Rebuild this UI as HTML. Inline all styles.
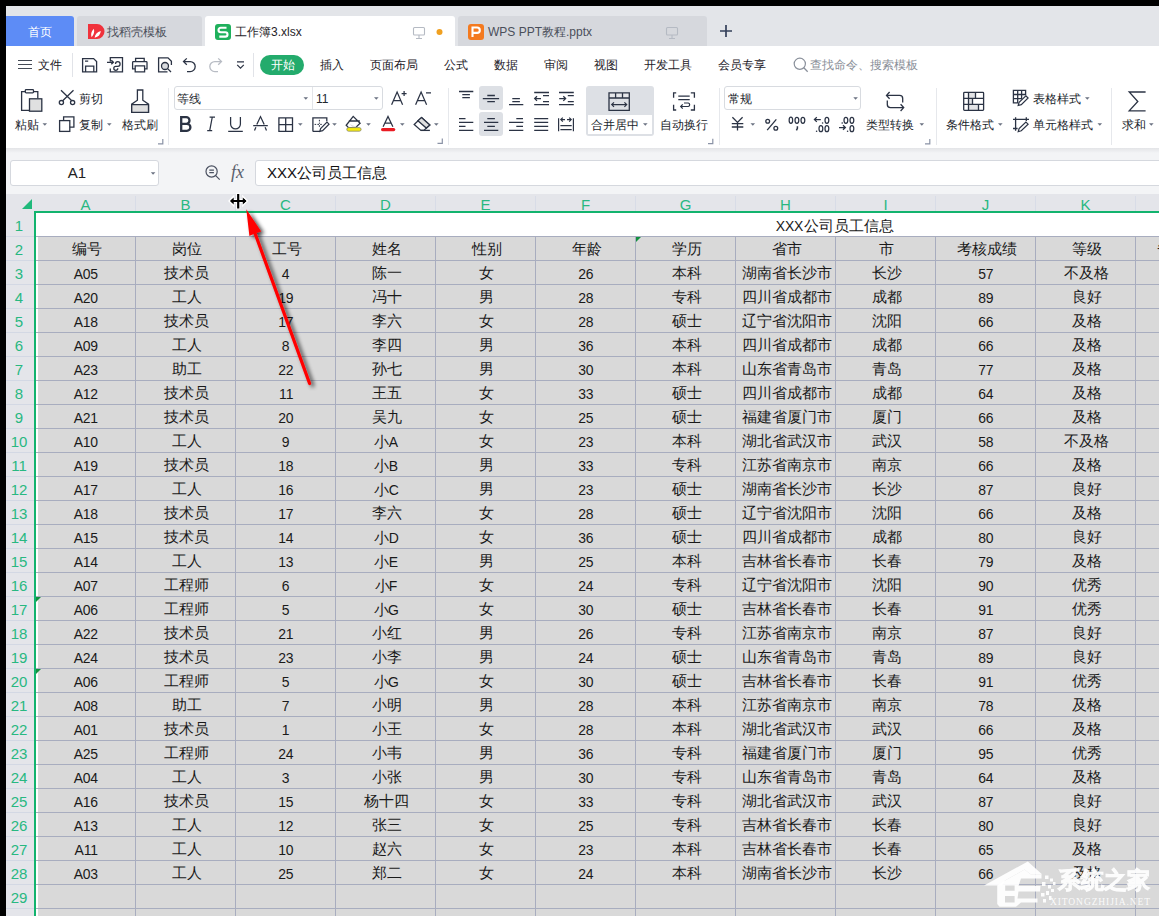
<!DOCTYPE html>
<html><head><meta charset="utf-8"><style>*{box-sizing:border-box;margin:0;padding:0}
html,body{width:1159px;height:916px;overflow:hidden;background:#000;font-family:"Liberation Sans",sans-serif;color:#222}
#root{position:absolute;left:0;top:0;width:1159px;height:916px;overflow:hidden}
.abs{position:absolute}
#tabbar{position:absolute;left:6px;top:6px;width:1153px;height:40px;background:#e3e4e8}
.tab{position:absolute;top:10px;height:30px;border-radius:3px 3px 0 0;font-size:13px;line-height:30px;white-space:nowrap}
#menu{position:absolute;left:6px;top:46px;width:1153px;height:102px;background:#fff}
#fbar{position:absolute;left:6px;top:148px;width:1153px;height:46px;background:#f3f4f6}
.mi{position:absolute;top:57px;font-size:13px;line-height:16px;color:#333;white-space:nowrap}
.colhdr{position:absolute;left:6px;top:194px;width:1153px;height:17px;background:#e4e5ea}
.ch{position:absolute;top:194px;width:101px;height:17px;text-align:center;font-size:15px;line-height:21px;color:#28b881}
.chl{position:absolute;top:196px;width:1px;height:15px;background:#d8dce7}
.rowhdr{position:absolute;left:6px;top:211px;width:28px;height:705px;background:#e4e5ea}
.rh{position:absolute;left:5px;width:28px;text-align:center;font-size:15px;color:#28b881;padding-top:1px}
.rhl{position:absolute;left:6px;width:28px;height:1px;background:#d3d8e4}
#grid{position:absolute;left:0;top:0;width:1159px;height:916px}
.cells{position:absolute;background:#d9d9d9}
.r1{position:absolute;background:#fff}
.hl{position:absolute;left:36px;width:1123px;height:1px;background:#a8adbf}
.vl{position:absolute;top:236px;width:1px;height:680px;background:#a8adbf}
.t{position:absolute;text-align:center;font-size:14.67px;color:#1a1a1a;white-space:nowrap}
.tri{position:absolute;width:0;height:0;border-top:5px solid #12903f;border-right:5px solid transparent}
.tt{position:absolute;top:17px;height:30px;line-height:30px;font-size:12px;white-space:nowrap}
.mt{position:absolute;top:57px;height:16px;line-height:16px;font-size:12px;color:#1d2128;white-space:nowrap}
.rl{position:absolute;height:14px;line-height:14px;font-size:12px;color:#22262d;white-space:nowrap}
.n{font-size:15.5px;letter-spacing:-0.2px;display:inline-block;transform:translateX(-0.7px) scaleX(0.9);transform-origin:50% 50%}
.t .n{margin-right:0}
</style></head><body>
<div id="root">
<div class="abs" style="left:6px;top:6px;width:1153px;height:40px;background:#e3e5e9"></div>
<div class="abs" style="left:6px;top:16px;width:68px;height:30px;background:#5d8cf6;border-radius:0 3px 0 0"></div>
<div class="abs" style="left:77px;top:16px;width:125px;height:30px;background:#d6d8dd;border-radius:3px 3px 0 0"></div>
<div class="abs" style="left:205px;top:16px;width:250px;height:30px;background:#fff;border-radius:3px 3px 0 0"></div>
<div class="abs" style="left:458px;top:16px;width:249px;height:30px;background:#d6d8dd;border-radius:3px 3px 0 0"></div>
<div class="tt" style="left:28px;color:#fff">首页</div>
<div class="tt" style="left:107px;color:#4a4f5a">找稻壳模板</div>
<div class="tt" style="left:235px;color:#1f2329">工作簿3.xlsx</div>
<div class="tt" style="left:488px;color:#4a4f5a">WPS PPT教程.pptx</div>
<div class="abs" style="left:6px;top:46px;width:1153px;height:102px;background:#fff"></div>
<div class="abs" style="left:6px;top:148px;width:1153px;height:46px;background:linear-gradient(#e3e4e7,#f3f4f6 5px)"></div>
<!-- menu text -->
<div class="mt" style="left:38px">文件</div>
<div class="abs" style="left:260px;top:55px;width:44px;height:20px;border-radius:10px;background:#23ab6c"></div>
<div class="mt" style="left:271px;color:#fff">开始</div>
<div class="mt" style="left:320px">插入</div>
<div class="mt" style="left:370px">页面布局</div>
<div class="mt" style="left:444px">公式</div>
<div class="mt" style="left:494px">数据</div>
<div class="mt" style="left:544px">审阅</div>
<div class="mt" style="left:594px">视图</div>
<div class="mt" style="left:644px">开发工具</div>
<div class="mt" style="left:718px">会员专享</div>
<div class="mt" style="left:810px;color:#8a8f99">查找命令、搜索模板</div>
<!-- ribbon labels -->
<div class="rl" style="left:15px;top:118px">粘贴</div>
<div class="rl" style="left:79px;top:92px">剪切</div>
<div class="rl" style="left:79px;top:118px">复制</div>
<div class="rl" style="left:122px;top:118px">格式刷</div>
<div class="abs" style="left:174px;top:86px;width:209px;height:24px;border:1px solid #d8dbe0;border-radius:3px;background:#fff"></div>
<div class="abs" style="left:312px;top:87px;width:1px;height:22px;background:#e3e5e9"></div>
<div class="rl" style="left:177px;top:92px">等线</div>
<div class="rl" style="left:316px;top:92px">11</div>
<div class="abs" style="left:586px;top:86px;width:68px;height:50px;background:#dde0e5;border-radius:3px"></div>
<div class="abs" style="left:588px;top:115px;width:64px;height:19px;background:#fff"></div>
<div class="abs" style="left:479px;top:86px;width:24px;height:24px;background:#dde0e5;border-radius:3px"></div>
<div class="abs" style="left:479px;top:112px;width:24px;height:24px;background:#dde0e5;border-radius:3px"></div>
<div class="rl" style="left:591px;top:118px">合并居中</div>
<div class="rl" style="left:660px;top:118px">自动换行</div>
<div class="abs" style="left:724px;top:86px;width:137px;height:24px;border:1px solid #d8dbe0;border-radius:3px;background:#fff"></div>
<div class="rl" style="left:728px;top:92px">常规</div>
<div class="rl" style="left:866px;top:118px">类型转换</div>
<div class="rl" style="left:946px;top:118px">条件格式</div>
<div class="rl" style="left:1033px;top:92px">表格样式</div>
<div class="rl" style="left:1033px;top:118px">单元格样式</div>
<div class="rl" style="left:1122px;top:118px">求和</div>
<!-- formula bar -->
<div class="abs" style="left:10px;top:160px;width:149px;height:26px;border:1px solid #d5d8de;border-radius:3px;background:#fff"></div>
<div class="abs" style="left:10px;top:160px;width:134px;height:26px;text-align:center;font-size:15px;line-height:26px;color:#222">A1</div>
<div class="abs" style="left:255px;top:160px;width:910px;height:26px;border:1px solid #d5d8de;border-radius:3px;background:#fff"></div>
<div class="abs" style="left:267px;top:160px;font-size:15px;line-height:26px;color:#111;white-space:nowrap">XXX公司员工信息</div>
<svg class="abs" style="left:0;top:0" width="1159" height="200" viewBox="0 0 1159 200" fill="none" stroke="#2b3344" stroke-width="1.3" stroke-linecap="butt" stroke-linejoin="miter">
<!-- tab icons -->
<g stroke="none">
<path d="M88 24 h9 a7.5 7.5 0 0 1 0 15 h-9 z" fill="#f0323c"/>
<path d="M91.6 37.2 q-1.6-4.2 2.2-8.4 q1.4 4.4 -2.2 8.4 z M94.6 37.8 q0.6-5.2 6.2-6.8 q-0.4 5.4 -6.2 6.8 z" fill="#fff"/>
<rect x="215" y="24" width="16" height="16" rx="3" fill="#1fb05c"/>
<path d="M226.5 27.8 h-5.8 a2.2 2.2 0 0 0 0 4.4 h4.6 a2.2 2.2 0 0 1 0 4.4 h-6" stroke="#fff" stroke-width="2.1" fill="none"/>
<rect x="468" y="24" width="16" height="16" rx="3" fill="#f47a1f"/>
<path d="M472.5 37 v-9.5 h4.6 a2.7 2.7 0 0 1 0 5.4 h-4.6" stroke="#fff" stroke-width="2.1" fill="none"/>
<circle cx="439.5" cy="32" r="3" fill="#f0a020"/>
</g>
<g stroke="#b5bac3" stroke-width="1.1">
<rect x="413.5" y="27.5" width="11" height="7.5" rx="1"/><path d="M419 35 v3 M416 38.5 h6"/>
<rect x="666.5" y="27.5" width="11" height="7.5" rx="1"/><path d="M672 35 v3 M669 38.5 h6"/>
</g>
<path d="M720 31 h12 M726 25 v12" stroke="#34405a" stroke-width="1.7"/>
<!-- menu row -->
<path d="M18 60.5 h14 M18 64.5 h14 M18 68.5 h14" stroke="#444a55" stroke-width="1.2"/>
<path d="M72.5 53 v24 M253.5 53 v24" stroke="#e1e3e8" stroke-width="1"/>
<path d="M82.6 58.6 h11 l3 3 v10.2 h-14 z M85.6 71.8 v-5.6 h8.2 v5.6 M85 61.2 h3.2"/>
<path d="M110.3 61.5 v-3.9 h12.2 v14.2 h-12.2 v-3.2 M107 62.3 h6.5 M111.3 60.3 l2.1 2 l-2.1 2 M115.5 64 a2.3 2.3 0 1 1 2.3 2.3 h-2 a2 2 0 1 0 2 2"/>
<path d="M135.6 61.9 v-3.5 h8.6 v3.5 M135.2 68.8 h-2.6 v-6.4 q0-0.8 0.8-0.8 h12.8 q0.8 0 0.8 0.8 v6.4 h-2.6 M135.2 65.8 h9.4 v6 h-9.4 z"/>
<path d="M167.5 71.8 h-8.9 v-14 h9.4 l3.4 3.4 v3.8"/>
<circle cx="165" cy="66" r="3.5" fill="#d9dbdf"/><path d="M167.6 68.6 l3.4 3.4"/>
<path d="M186.8 58.4 l-3.3 3.2 l3.3 3.2 M183.6 61.6 h6.6 a5 5 0 0 1 0 10 h-3.2"/>
<path d="M218.2 58.4 l3.3 3.2 l-3.3 3.2 M221.4 61.6 h-6.6 a5 5 0 0 0 0 10 h3.2" stroke="#b8bcc4"/>
<path d="M237 61.8 h7 M237.2 64.8 l3.3 3.3 l3.3 -3.3" stroke-width="1.2"/>
<circle cx="799.8" cy="63.8" r="5.6" stroke="#8a909b" stroke-width="1.2"/><path d="M803.8 67.8 l3.9 3.9" stroke="#8a909b" stroke-width="1.3"/>
<!-- separators ribbon -->
<path d="M168.5 88 v57 M448.5 88 v57 M719.5 88 v57 M936.5 88 v57 M1111.5 88 v57" stroke="#e6e8ec" stroke-width="1"/>
<!-- corner marks -->
<path d="M162.8 139 v4.8 h-4.8 M442.3 138.5 v4.8 h-4.8 M712.8 138.8 v4.8 h-4.8 M929.8 139 v4.8 h-4.8" stroke="#8b93a6" stroke-width="1.2"/>
<!-- group 1 -->
<path d="M29 110.4 h-7.4 v-18.8 h3.6 M33.6 91.6 h4.2 v7"/>
<rect x="25.3" y="89.6" width="8.2" height="3.2" rx="0.8" fill="#fff"/>
<rect x="29.5" y="98.8" width="12.3" height="12.4" fill="#e0e0e0"/>
<path d="M61 90.3 L71.8 100.8 M73.5 90.3 L62.7 100.8"/>
<circle cx="61.4" cy="102.6" r="2.1"/><circle cx="72.6" cy="102.6" r="2.1"/>
<rect x="59.6" y="120.6" width="10.2" height="10.8"/>
<path d="M63.6 120.6 v-3.7 h10.3 v10.3 h-4.1"/>
<path d="M137.4 100.2 v-10.2 h5.4 v10.2 l5.7 4 v8.2 h-16.8 v-8.2 z" />
<rect x="132.2" y="105" width="15.8" height="7" fill="#e0e0e0" stroke="none"/>
<path d="M131.7 104.6 h16.8 M131.7 104.2 v8.2 h16.8 v-8.2"/>
<!-- dropdown tris -->
<g fill="#6b7282" stroke="none">
<path d="M42.5 123.3 h4.6 l-2.3 2.4 z"/>
<path d="M107 123.3 h4.6 l-2.3 2.4 z"/>
<path d="M303.5 97.3 h4.6 l-2.3 2.4 z"/>
<path d="M374 97.3 h4.6 l-2.3 2.4 z"/>
<path d="M298 123.3 h4.6 l-2.3 2.4 z"/>
<path d="M332.2 123.3 h4.6 l-2.3 2.4 z"/>
<path d="M366.2 123.3 h4.6 l-2.3 2.4 z"/>
<path d="M400 123.3 h4.6 l-2.3 2.4 z"/>
<path d="M434 123.3 h4.6 l-2.3 2.4 z"/>
<path d="M643 123.3 h4.6 l-2.3 2.4 z"/>
<path d="M853.3 97.3 h4.6 l-2.3 2.4 z"/>
<path d="M750.5 123.3 h4.6 l-2.3 2.4 z"/>
<path d="M919.5 123.3 h4.6 l-2.3 2.4 z"/>
<path d="M998 123.3 h4.6 l-2.3 2.4 z"/>
<path d="M1085 97.3 h4.6 l-2.3 2.4 z"/>
<path d="M1097.5 123.3 h4.6 l-2.3 2.4 z"/>
<path d="M1149 123.3 h4.6 l-2.3 2.4 z"/>
<path d="M150.8 172.3 h4.6 l-2.3 2.4 z"/>
</g>
<!-- group 2 -->
<path d="M391.6 104.8 L397.1 92 L402.6 104.8 M393.4 100.6 h7.4 M401.6 93.6 h5 M404.1 91.1 v5" stroke-width="1.25"/>
<path d="M415.6 104.8 L421.1 92 L426.6 104.8 M417.4 100.6 h7.4 M426 92.8 h5" stroke-width="1.25"/>
<path d="M181.2 117.2 h5 a3.3 3.3 0 0 1 0 6.6 h-5 z M181.2 123.8 h5.7 a3.5 3.5 0 0 1 0 7 h-5.7 z" stroke-width="2.3"/>
<path d="M209.6 117 h5.4 M207.2 130.6 h5 M212.3 117 L209.7 130.6" stroke-width="1.25"/>
<path d="M230.6 117 v7 a4.9 4.9 0 0 0 9.8 0 v-7 M228.2 131.4 h14.6" stroke-width="1.25"/>
<path d="M256.8 124.5 L260.5 116.6 L264.2 124.5 M253.2 125.6 h14.6 M255.9 127.2 L254.5 130.6 M265.1 127.2 L266.5 130.6" stroke-width="1.25"/>
<path d="M278.9 117.9 h13.6 v13.4 h-13.6 z M285.7 117.9 v13.4 M278.9 124.6 h13.6"/>
<path d="M312.9 131.4 v-13.5 h13.9 v3.4 M312.9 131.4 h7.2" />
<path d="M314.6 124.4 h1.6 M317.4 124.4 h1.6 M320.2 124.4 h1.6 M319.4 119.8 v1.6 M319.4 122.6 v1.2 M319.4 125.2 v1.6" stroke-width="1"/>
<path d="M319.8 131.4 l0.8 -2.8 l6.4 -6.4 l2 2 l-6.4 6.4 z" stroke-width="1.2"/>
<path d="M353.2 116.4 l6.9 6.8 l-4.6 4.4 h-7 l-2.3 -2.3 z M348.8 121 h11" />
<path d="M349.5 124 l3 3.3 h5" fill="#e0e0e0" stroke="none"/>
<rect x="346.8" y="127.6" width="14.3" height="3.6" rx="1.8" fill="#f7ec0c" stroke="#8a8a70" stroke-width="0.8"/>
<path d="M383.1 126.8 L388 116.4 L392.9 126.8 M384.9 123.2 h6.3" stroke-width="1.25"/>
<rect x="381" y="128" width="14.3" height="3.2" rx="1.6" fill="#ea1b23" stroke="none"/>
<path d="M421.5 117.6 l8.3 7.3 l-6 5.5 h-2.9 l-6.7 -6 z" fill="none"/>
<path d="M421.5 117.6 l8.3 7.3 l-3.5 3.2 l-8.4 -7.4 z" fill="#e0e0e0"/>
<path d="M420.9 130.4 h9"/>
<!-- group 3 align -->
<path d="M459 91.5 h14.3 M462.3 94.6 h7.6 M462.3 97.6 h7.6" stroke-width="1.3"/>
<path d="M487.3 95.5 h7.6 M482.8 98.6 h16.3 M487.3 101.6 h7.6" stroke-width="1.3"/>
<path d="M512.3 98.6 h7.6 M512.3 101.6 h7.6 M509 104.6 h14.3" stroke-width="1.3"/>
<path d="M534.2 92.5 h14.8 M543 95.6 h6 M543 101.6 h6 M534.2 104.6 h14.8 M541 98.6 h-6.5 M537 96.3 l-2.3 2.3 l2.3 2.3" stroke-width="1.3"/>
<path d="M559 92.5 h14.8 M567.8 95.6 h6 M567.8 101.6 h6 M559 104.6 h14.8 M559.2 98.6 h6.5 M563.3 96.3 l2.3 2.3 l-2.3 2.3" stroke-width="1.3"/>
<path d="M459 118.7 h6.5 M459 122.4 h14.3 M459 126.4 h6.5 M459 130.3 h14.3" stroke-width="1.3"/>
<path d="M487.3 118.7 h7.6 M484 122.4 h14.3 M487.3 126.4 h7.6 M484 130.3 h14.3" stroke-width="1.3"/>
<path d="M516.3 118.7 h6.7 M509 122.4 h14.3 M516.3 126.4 h6.7 M509 130.3 h14.3" stroke-width="1.3"/>
<path d="M534.2 118.7 h14 M534.2 122.4 h14 M534.2 126.4 h14 M534.2 130.3 h14" stroke-width="1.3"/>
<path d="M558.6 118.2 v13 M573.4 118.2 v13 M560.4 125.6 h11.3 M560.4 129.7 h11.3 M561 119.6 h4 M567 119.6 h4 M562.8 117.6 l-2 2 l2 2 M569.2 117.6 l2 2 l-2 2" stroke-width="1.2"/>
<!-- merge -->
<rect x="609.8" y="93" width="5.8" height="5" fill="#e6e7ea" stroke="none"/>
<rect x="615.6" y="93" width="7" height="5" fill="#e6e7ea" stroke="none"/>
<rect x="622.5" y="93" width="6.5" height="5" fill="#e6e7ea" stroke="none"/>
<path d="M609 92.8 h20.3 v17.6 h-20.3 z M609 98 h20.3 M615.6 92.8 v5.2 M622.5 92.8 v5.2"/>
<path d="M611.6 104.6 h15.2 M614 102.3 l-2.3 2.3 l2.3 2.3 M624.4 102.3 l2.3 2.3 l-2.3 2.3" stroke-width="1.2"/>
<path d="M676.2 92.8 h-2.6 v5 M690.8 92.8 h3.6 v5 M673.6 104.8 v5.2 h2.6 M694.4 104.8 v5.2 h-3.6"/>
<path d="M678.3 96.2 h11.4 M678.3 99.6 h11.4 M684 103 h4.3 a1.8 1.8 0 0 1 0 3.5 h-7.6 M682.7 104.4 l-2 2.1 l2 2.1" stroke-width="1.2"/>
<!-- group 4 -->
<path d="M732.4 117.2 l5.1 5.2 l5.1 -5.2 M737.5 122.4 v8.2 M731.8 123.6 h11.5 M731.8 127 h11.5" stroke-width="1.3"/>
<circle cx="767.7" cy="121.2" r="1.9"/><circle cx="775.8" cy="128.2" r="1.9"/>
<path d="M776.3 119.3 L767.2 130.2" stroke-width="1.3"/>
<path d="M889.6 92 l-3.1 3.4 l3.1 3.4 M886.8 95.4 h12.8 a3.1 3.1 0 0 1 3.1 3.1 v4 M887.3 100.6 v4 a3.1 3.1 0 0 0 3.1 3.1 h12.8 M900.6 104.2 l3.1 3.4 l-3.1 3.4" stroke-width="1.3"/>
<!-- group 5 -->
<rect x="968.8" y="92.8" width="6.5" height="5.4" fill="#e2e3e6" stroke="none"/>
<rect x="968.8" y="98.6" width="3.6" height="5.5" fill="#e2e3e6" stroke="none"/>
<rect x="968.8" y="104.5" width="9.5" height="5.6" fill="#e2e3e6" stroke="none"/>
<rect x="963.7" y="92.4" width="19.9" height="18" rx="0.8"/>
<path d="M963.7 98.4 h19.9 M963.7 104.3 h19.9 M968.5 92.4 v18 M975.5 92.4 v6 M972.5 98.4 v5.9 M978.5 104.3 v6.1"/>
<path d="M1013.4 90.4 H1025.6 V94.5 H1021.6 V98.6 H1017.7 V102.8 H1013.4 Z M1013.4 94.5 H1021.6 M1013.4 98.6 H1017.7 M1017.7 90.4 V98.6 M1021.6 90.4 V94.5"/>
<path d="M1018.2 105.4 l0.9 -3 l6.8 -6.6 l2.2 2.2 l-6.8 6.6 z" stroke-width="1.2"/>
<path d="M1013 119.3 h16 M1015.6 117.2 v13.6 M1026.3 117.2 v3.8 M1013 128.5 h4.6"/>
<path d="M1018.2 131.6 l0.9 -3 l6.8 -6.6 l2.2 2.2 l-6.8 6.6 z" stroke-width="1.2"/>
<path d="M1145.6 92 h-16.4 l8.6 9.5 l-8.6 9.3 h16.4" stroke-width="1.3"/>
<!-- formula -->
<circle cx="211.6" cy="171.5" r="5.6" stroke="#4a5060" stroke-width="1.2"/>
<path d="M209.3 170.2 h4.6 M209.3 172.6 h4.6 M215.7 175.6 l4 4" stroke="#4a5060" stroke-width="1.2"/>
</svg>
<svg class="abs" style="left:0;top:0" width="1159" height="200" fill="none" stroke="#2b3344" stroke-width="1.25"><ellipse cx="790.9" cy="120.3" rx="1.75" ry="3.1"/><ellipse cx="796.9" cy="120.3" rx="1.9" ry="3.0"/><ellipse cx="802.9" cy="120.3" rx="1.9" ry="3.0"/><path d="M797.4 126.2 v2.2 l-1 2" stroke-width="1.5"/><path d="M820.8 119.6 h-6.4 M816.8 117.3 l-2.4 2.3 l2.4 2.3"/><circle cx="822.6" cy="123" r="0.8" fill="#2b3344" stroke="none"/><ellipse cx="826.9" cy="120.3" rx="1.9" ry="3.0"/><circle cx="816.6" cy="131.2" r="0.8" fill="#2b3344" stroke="none"/><ellipse cx="820.9" cy="128.7" rx="1.9" ry="3.0"/><ellipse cx="826.9" cy="128.7" rx="1.9" ry="3.0"/><circle cx="842.2" cy="123" r="0.8" fill="#2b3344" stroke="none"/><ellipse cx="845.9" cy="120.3" rx="1.9" ry="3.0"/><ellipse cx="851.9" cy="120.3" rx="1.9" ry="3.0"/><path d="M839 127.5 h6.4 M843 125.2 l2.4 2.3 l-2.4 2.3"/><circle cx="847.6" cy="131.2" r="0.8" fill="#2b3344" stroke="none"/><ellipse cx="851.9" cy="128.7" rx="1.9" ry="3.0"/></svg>
<div class="abs" style="left:231px;top:162px;font-size:18px;line-height:20px;color:#5a606c;font-family:'Liberation Serif',serif;font-style:italic">fx</div>


<div class="colhdr"></div><svg class="abs" style="left:0;top:0" width="40" height="215"><path d="M22 209 L32 199 L32 209 Z" fill="#20b97b"/></svg><div class="ch" style="left:35px">A</div><div class="chl" style="left:135px"></div><div class="ch" style="left:135px">B</div><div class="chl" style="left:235px"></div><div class="ch" style="left:235px">C</div><div class="chl" style="left:335px"></div><div class="ch" style="left:335px">D</div><div class="chl" style="left:435px"></div><div class="ch" style="left:435px">E</div><div class="chl" style="left:535px"></div><div class="ch" style="left:535px">F</div><div class="chl" style="left:635px"></div><div class="ch" style="left:635px">G</div><div class="chl" style="left:735px"></div><div class="ch" style="left:735px">H</div><div class="chl" style="left:835px"></div><div class="ch" style="left:835px">I</div><div class="chl" style="left:935px"></div><div class="ch" style="left:935px">J</div><div class="chl" style="left:1035px"></div><div class="ch" style="left:1035px">K</div><div class="chl" style="left:1135px"></div><div class="ch" style="left:1135px">L</div><div class="chl" style="left:1235px"></div>
<div class="rowhdr"></div><div class="rh" style="top:213px;height:23px;line-height:23px">1</div><div class="rhl" style="top:236px"></div><div class="rh" style="top:237px;height:23px;line-height:23px">2</div><div class="rhl" style="top:260px"></div><div class="rh" style="top:261px;height:23px;line-height:23px">3</div><div class="rhl" style="top:284px"></div><div class="rh" style="top:285px;height:23px;line-height:23px">4</div><div class="rhl" style="top:308px"></div><div class="rh" style="top:309px;height:23px;line-height:23px">5</div><div class="rhl" style="top:332px"></div><div class="rh" style="top:333px;height:23px;line-height:23px">6</div><div class="rhl" style="top:356px"></div><div class="rh" style="top:357px;height:23px;line-height:23px">7</div><div class="rhl" style="top:380px"></div><div class="rh" style="top:381px;height:23px;line-height:23px">8</div><div class="rhl" style="top:404px"></div><div class="rh" style="top:405px;height:23px;line-height:23px">9</div><div class="rhl" style="top:428px"></div><div class="rh" style="top:429px;height:23px;line-height:23px">10</div><div class="rhl" style="top:452px"></div><div class="rh" style="top:453px;height:23px;line-height:23px">11</div><div class="rhl" style="top:476px"></div><div class="rh" style="top:477px;height:23px;line-height:23px">12</div><div class="rhl" style="top:500px"></div><div class="rh" style="top:501px;height:23px;line-height:23px">13</div><div class="rhl" style="top:524px"></div><div class="rh" style="top:525px;height:23px;line-height:23px">14</div><div class="rhl" style="top:548px"></div><div class="rh" style="top:549px;height:23px;line-height:23px">15</div><div class="rhl" style="top:572px"></div><div class="rh" style="top:573px;height:23px;line-height:23px">16</div><div class="rhl" style="top:596px"></div><div class="rh" style="top:597px;height:23px;line-height:23px">17</div><div class="rhl" style="top:620px"></div><div class="rh" style="top:621px;height:23px;line-height:23px">18</div><div class="rhl" style="top:644px"></div><div class="rh" style="top:645px;height:23px;line-height:23px">19</div><div class="rhl" style="top:668px"></div><div class="rh" style="top:669px;height:23px;line-height:23px">20</div><div class="rhl" style="top:692px"></div><div class="rh" style="top:693px;height:23px;line-height:23px">21</div><div class="rhl" style="top:716px"></div><div class="rh" style="top:717px;height:23px;line-height:23px">22</div><div class="rhl" style="top:740px"></div><div class="rh" style="top:741px;height:23px;line-height:23px">23</div><div class="rhl" style="top:764px"></div><div class="rh" style="top:765px;height:23px;line-height:23px">24</div><div class="rhl" style="top:788px"></div><div class="rh" style="top:789px;height:23px;line-height:23px">25</div><div class="rhl" style="top:812px"></div><div class="rh" style="top:813px;height:23px;line-height:23px">26</div><div class="rhl" style="top:836px"></div><div class="rh" style="top:837px;height:23px;line-height:23px">27</div><div class="rhl" style="top:860px"></div><div class="rh" style="top:861px;height:23px;line-height:23px">28</div><div class="rhl" style="top:884px"></div><div class="rh" style="top:885px;height:23px;line-height:23px">29</div><div class="rhl" style="top:908px"></div><div class="rh" style="top:909px;height:23px;line-height:23px">30</div><div class="rhl" style="top:932px"></div>
<div id="grid"><div class="cells" style="left:36px;top:236px;width:1123px;height:680px"></div><div class="r1" style="left:36px;top:213px;width:1123px;height:23px"></div><div style="position:absolute;left:36px;top:236px;width:2px;height:680px;background:#fff"></div><div class="hl" style="top:236px"></div><div class="hl" style="top:260px"></div><div class="hl" style="top:284px"></div><div class="hl" style="top:308px"></div><div class="hl" style="top:332px"></div><div class="hl" style="top:356px"></div><div class="hl" style="top:380px"></div><div class="hl" style="top:404px"></div><div class="hl" style="top:428px"></div><div class="hl" style="top:452px"></div><div class="hl" style="top:476px"></div><div class="hl" style="top:500px"></div><div class="hl" style="top:524px"></div><div class="hl" style="top:548px"></div><div class="hl" style="top:572px"></div><div class="hl" style="top:596px"></div><div class="hl" style="top:620px"></div><div class="hl" style="top:644px"></div><div class="hl" style="top:668px"></div><div class="hl" style="top:692px"></div><div class="hl" style="top:716px"></div><div class="hl" style="top:740px"></div><div class="hl" style="top:764px"></div><div class="hl" style="top:788px"></div><div class="hl" style="top:812px"></div><div class="hl" style="top:836px"></div><div class="hl" style="top:860px"></div><div class="hl" style="top:884px"></div><div class="hl" style="top:908px"></div><div class="vl" style="left:135px"></div><div class="vl" style="left:235px"></div><div class="vl" style="left:335px"></div><div class="vl" style="left:435px"></div><div class="vl" style="left:535px"></div><div class="vl" style="left:635px"></div><div class="vl" style="left:735px"></div><div class="vl" style="left:835px"></div><div class="vl" style="left:935px"></div><div class="vl" style="left:1035px"></div><div class="vl" style="left:1135px"></div><div style="position:absolute;left:34px;top:211px;width:1125px;height:2px;background:#12b36e"></div><div style="position:absolute;left:34px;top:211px;width:2px;height:705px;background:#12b36e"></div><div class="t" style="left:735px;top:214px;width:200px;height:23px;line-height:23px"><span class="n" style="margin:0 -1.55px">XXX</span>公司员工信息</div><div class="t" style="left:36px;top:238px;width:101px;height:23px;line-height:23px">编号</div><div class="t" style="left:136px;top:238px;width:101px;height:23px;line-height:23px">岗位</div><div class="t" style="left:236px;top:238px;width:101px;height:23px;line-height:23px">工号</div><div class="t" style="left:336px;top:238px;width:101px;height:23px;line-height:23px">姓名</div><div class="t" style="left:436px;top:238px;width:101px;height:23px;line-height:23px">性别</div><div class="t" style="left:536px;top:238px;width:101px;height:23px;line-height:23px">年龄</div><div class="t" style="left:636px;top:238px;width:101px;height:23px;line-height:23px">学历</div><div class="t" style="left:736px;top:238px;width:101px;height:23px;line-height:23px">省市</div><div class="t" style="left:836px;top:238px;width:101px;height:23px;line-height:23px">市</div><div class="t" style="left:936px;top:238px;width:101px;height:23px;line-height:23px">考核成绩</div><div class="t" style="left:1036px;top:238px;width:101px;height:23px;line-height:23px">等级</div><div class="t" style="left:36px;top:262px;width:101px;height:23px;line-height:23px"><span class="n" style="margin:0 -1.35px">A05</span></div><div class="t" style="left:136px;top:262px;width:101px;height:23px;line-height:23px">技术员</div><div class="t" style="left:236px;top:262px;width:101px;height:23px;line-height:23px"><span class="n" style="margin:0 -0.42px">4</span></div><div class="t" style="left:336px;top:262px;width:101px;height:23px;line-height:23px">陈一</div><div class="t" style="left:436px;top:262px;width:101px;height:23px;line-height:23px">女</div><div class="t" style="left:536px;top:262px;width:101px;height:23px;line-height:23px"><span class="n" style="margin:0 -0.84px">26</span></div><div class="t" style="left:636px;top:262px;width:101px;height:23px;line-height:23px">本科</div><div class="t" style="left:736px;top:262px;width:101px;height:23px;line-height:23px">湖南省长沙市</div><div class="t" style="left:836px;top:262px;width:101px;height:23px;line-height:23px">长沙</div><div class="t" style="left:936px;top:262px;width:101px;height:23px;line-height:23px"><span class="n" style="margin:0 -0.84px">57</span></div><div class="t" style="left:1036px;top:262px;width:101px;height:23px;line-height:23px">不及格</div><div class="t" style="left:36px;top:286px;width:101px;height:23px;line-height:23px"><span class="n" style="margin:0 -1.35px">A20</span></div><div class="t" style="left:136px;top:286px;width:101px;height:23px;line-height:23px">工人</div><div class="t" style="left:236px;top:286px;width:101px;height:23px;line-height:23px"><span class="n" style="margin:0 -0.84px">19</span></div><div class="t" style="left:336px;top:286px;width:101px;height:23px;line-height:23px">冯十</div><div class="t" style="left:436px;top:286px;width:101px;height:23px;line-height:23px">男</div><div class="t" style="left:536px;top:286px;width:101px;height:23px;line-height:23px"><span class="n" style="margin:0 -0.84px">28</span></div><div class="t" style="left:636px;top:286px;width:101px;height:23px;line-height:23px">专科</div><div class="t" style="left:736px;top:286px;width:101px;height:23px;line-height:23px">四川省成都市</div><div class="t" style="left:836px;top:286px;width:101px;height:23px;line-height:23px">成都</div><div class="t" style="left:936px;top:286px;width:101px;height:23px;line-height:23px"><span class="n" style="margin:0 -0.84px">89</span></div><div class="t" style="left:1036px;top:286px;width:101px;height:23px;line-height:23px">良好</div><div class="t" style="left:36px;top:310px;width:101px;height:23px;line-height:23px"><span class="n" style="margin:0 -1.35px">A18</span></div><div class="t" style="left:136px;top:310px;width:101px;height:23px;line-height:23px">技术员</div><div class="t" style="left:236px;top:310px;width:101px;height:23px;line-height:23px"><span class="n" style="margin:0 -0.84px">17</span></div><div class="t" style="left:336px;top:310px;width:101px;height:23px;line-height:23px">李六</div><div class="t" style="left:436px;top:310px;width:101px;height:23px;line-height:23px">女</div><div class="t" style="left:536px;top:310px;width:101px;height:23px;line-height:23px"><span class="n" style="margin:0 -0.84px">28</span></div><div class="t" style="left:636px;top:310px;width:101px;height:23px;line-height:23px">硕士</div><div class="t" style="left:736px;top:310px;width:101px;height:23px;line-height:23px">辽宁省沈阳市</div><div class="t" style="left:836px;top:310px;width:101px;height:23px;line-height:23px">沈阳</div><div class="t" style="left:936px;top:310px;width:101px;height:23px;line-height:23px"><span class="n" style="margin:0 -0.84px">66</span></div><div class="t" style="left:1036px;top:310px;width:101px;height:23px;line-height:23px">及格</div><div class="t" style="left:36px;top:334px;width:101px;height:23px;line-height:23px"><span class="n" style="margin:0 -1.35px">A09</span></div><div class="t" style="left:136px;top:334px;width:101px;height:23px;line-height:23px">工人</div><div class="t" style="left:236px;top:334px;width:101px;height:23px;line-height:23px"><span class="n" style="margin:0 -0.42px">8</span></div><div class="t" style="left:336px;top:334px;width:101px;height:23px;line-height:23px">李四</div><div class="t" style="left:436px;top:334px;width:101px;height:23px;line-height:23px">男</div><div class="t" style="left:536px;top:334px;width:101px;height:23px;line-height:23px"><span class="n" style="margin:0 -0.84px">36</span></div><div class="t" style="left:636px;top:334px;width:101px;height:23px;line-height:23px">本科</div><div class="t" style="left:736px;top:334px;width:101px;height:23px;line-height:23px">四川省成都市</div><div class="t" style="left:836px;top:334px;width:101px;height:23px;line-height:23px">成都</div><div class="t" style="left:936px;top:334px;width:101px;height:23px;line-height:23px"><span class="n" style="margin:0 -0.84px">66</span></div><div class="t" style="left:1036px;top:334px;width:101px;height:23px;line-height:23px">及格</div><div class="t" style="left:36px;top:358px;width:101px;height:23px;line-height:23px"><span class="n" style="margin:0 -1.35px">A23</span></div><div class="t" style="left:136px;top:358px;width:101px;height:23px;line-height:23px">助工</div><div class="t" style="left:236px;top:358px;width:101px;height:23px;line-height:23px"><span class="n" style="margin:0 -0.84px">22</span></div><div class="t" style="left:336px;top:358px;width:101px;height:23px;line-height:23px">孙七</div><div class="t" style="left:436px;top:358px;width:101px;height:23px;line-height:23px">男</div><div class="t" style="left:536px;top:358px;width:101px;height:23px;line-height:23px"><span class="n" style="margin:0 -0.84px">30</span></div><div class="t" style="left:636px;top:358px;width:101px;height:23px;line-height:23px">本科</div><div class="t" style="left:736px;top:358px;width:101px;height:23px;line-height:23px">山东省青岛市</div><div class="t" style="left:836px;top:358px;width:101px;height:23px;line-height:23px">青岛</div><div class="t" style="left:936px;top:358px;width:101px;height:23px;line-height:23px"><span class="n" style="margin:0 -0.84px">77</span></div><div class="t" style="left:1036px;top:358px;width:101px;height:23px;line-height:23px">及格</div><div class="t" style="left:36px;top:382px;width:101px;height:23px;line-height:23px"><span class="n" style="margin:0 -1.35px">A12</span></div><div class="t" style="left:136px;top:382px;width:101px;height:23px;line-height:23px">技术员</div><div class="t" style="left:236px;top:382px;width:101px;height:23px;line-height:23px"><span class="n" style="margin:0 -0.84px">11</span></div><div class="t" style="left:336px;top:382px;width:101px;height:23px;line-height:23px">王五</div><div class="t" style="left:436px;top:382px;width:101px;height:23px;line-height:23px">女</div><div class="t" style="left:536px;top:382px;width:101px;height:23px;line-height:23px"><span class="n" style="margin:0 -0.84px">33</span></div><div class="t" style="left:636px;top:382px;width:101px;height:23px;line-height:23px">硕士</div><div class="t" style="left:736px;top:382px;width:101px;height:23px;line-height:23px">四川省成都市</div><div class="t" style="left:836px;top:382px;width:101px;height:23px;line-height:23px">成都</div><div class="t" style="left:936px;top:382px;width:101px;height:23px;line-height:23px"><span class="n" style="margin:0 -0.84px">64</span></div><div class="t" style="left:1036px;top:382px;width:101px;height:23px;line-height:23px">及格</div><div class="t" style="left:36px;top:406px;width:101px;height:23px;line-height:23px"><span class="n" style="margin:0 -1.35px">A21</span></div><div class="t" style="left:136px;top:406px;width:101px;height:23px;line-height:23px">技术员</div><div class="t" style="left:236px;top:406px;width:101px;height:23px;line-height:23px"><span class="n" style="margin:0 -0.84px">20</span></div><div class="t" style="left:336px;top:406px;width:101px;height:23px;line-height:23px">吴九</div><div class="t" style="left:436px;top:406px;width:101px;height:23px;line-height:23px">女</div><div class="t" style="left:536px;top:406px;width:101px;height:23px;line-height:23px"><span class="n" style="margin:0 -0.84px">25</span></div><div class="t" style="left:636px;top:406px;width:101px;height:23px;line-height:23px">硕士</div><div class="t" style="left:736px;top:406px;width:101px;height:23px;line-height:23px">福建省厦门市</div><div class="t" style="left:836px;top:406px;width:101px;height:23px;line-height:23px">厦门</div><div class="t" style="left:936px;top:406px;width:101px;height:23px;line-height:23px"><span class="n" style="margin:0 -0.84px">66</span></div><div class="t" style="left:1036px;top:406px;width:101px;height:23px;line-height:23px">及格</div><div class="t" style="left:36px;top:430px;width:101px;height:23px;line-height:23px"><span class="n" style="margin:0 -1.35px">A10</span></div><div class="t" style="left:136px;top:430px;width:101px;height:23px;line-height:23px">工人</div><div class="t" style="left:236px;top:430px;width:101px;height:23px;line-height:23px"><span class="n" style="margin:0 -0.42px">9</span></div><div class="t" style="left:336px;top:430px;width:101px;height:23px;line-height:23px">小<span class="n" style="margin:0 -0.51px">A</span></div><div class="t" style="left:436px;top:430px;width:101px;height:23px;line-height:23px">女</div><div class="t" style="left:536px;top:430px;width:101px;height:23px;line-height:23px"><span class="n" style="margin:0 -0.84px">23</span></div><div class="t" style="left:636px;top:430px;width:101px;height:23px;line-height:23px">本科</div><div class="t" style="left:736px;top:430px;width:101px;height:23px;line-height:23px">湖北省武汉市</div><div class="t" style="left:836px;top:430px;width:101px;height:23px;line-height:23px">武汉</div><div class="t" style="left:936px;top:430px;width:101px;height:23px;line-height:23px"><span class="n" style="margin:0 -0.84px">58</span></div><div class="t" style="left:1036px;top:430px;width:101px;height:23px;line-height:23px">不及格</div><div class="t" style="left:36px;top:454px;width:101px;height:23px;line-height:23px"><span class="n" style="margin:0 -1.35px">A19</span></div><div class="t" style="left:136px;top:454px;width:101px;height:23px;line-height:23px">技术员</div><div class="t" style="left:236px;top:454px;width:101px;height:23px;line-height:23px"><span class="n" style="margin:0 -0.84px">18</span></div><div class="t" style="left:336px;top:454px;width:101px;height:23px;line-height:23px">小<span class="n" style="margin:0 -0.51px">B</span></div><div class="t" style="left:436px;top:454px;width:101px;height:23px;line-height:23px">男</div><div class="t" style="left:536px;top:454px;width:101px;height:23px;line-height:23px"><span class="n" style="margin:0 -0.84px">33</span></div><div class="t" style="left:636px;top:454px;width:101px;height:23px;line-height:23px">专科</div><div class="t" style="left:736px;top:454px;width:101px;height:23px;line-height:23px">江苏省南京市</div><div class="t" style="left:836px;top:454px;width:101px;height:23px;line-height:23px">南京</div><div class="t" style="left:936px;top:454px;width:101px;height:23px;line-height:23px"><span class="n" style="margin:0 -0.84px">66</span></div><div class="t" style="left:1036px;top:454px;width:101px;height:23px;line-height:23px">及格</div><div class="t" style="left:36px;top:478px;width:101px;height:23px;line-height:23px"><span class="n" style="margin:0 -1.35px">A17</span></div><div class="t" style="left:136px;top:478px;width:101px;height:23px;line-height:23px">工人</div><div class="t" style="left:236px;top:478px;width:101px;height:23px;line-height:23px"><span class="n" style="margin:0 -0.84px">16</span></div><div class="t" style="left:336px;top:478px;width:101px;height:23px;line-height:23px">小<span class="n" style="margin:0 -0.55px">C</span></div><div class="t" style="left:436px;top:478px;width:101px;height:23px;line-height:23px">男</div><div class="t" style="left:536px;top:478px;width:101px;height:23px;line-height:23px"><span class="n" style="margin:0 -0.84px">23</span></div><div class="t" style="left:636px;top:478px;width:101px;height:23px;line-height:23px">硕士</div><div class="t" style="left:736px;top:478px;width:101px;height:23px;line-height:23px">湖南省长沙市</div><div class="t" style="left:836px;top:478px;width:101px;height:23px;line-height:23px">长沙</div><div class="t" style="left:936px;top:478px;width:101px;height:23px;line-height:23px"><span class="n" style="margin:0 -0.84px">87</span></div><div class="t" style="left:1036px;top:478px;width:101px;height:23px;line-height:23px">良好</div><div class="t" style="left:36px;top:502px;width:101px;height:23px;line-height:23px"><span class="n" style="margin:0 -1.35px">A18</span></div><div class="t" style="left:136px;top:502px;width:101px;height:23px;line-height:23px">技术员</div><div class="t" style="left:236px;top:502px;width:101px;height:23px;line-height:23px"><span class="n" style="margin:0 -0.84px">17</span></div><div class="t" style="left:336px;top:502px;width:101px;height:23px;line-height:23px">李六</div><div class="t" style="left:436px;top:502px;width:101px;height:23px;line-height:23px">女</div><div class="t" style="left:536px;top:502px;width:101px;height:23px;line-height:23px"><span class="n" style="margin:0 -0.84px">28</span></div><div class="t" style="left:636px;top:502px;width:101px;height:23px;line-height:23px">硕士</div><div class="t" style="left:736px;top:502px;width:101px;height:23px;line-height:23px">辽宁省沈阳市</div><div class="t" style="left:836px;top:502px;width:101px;height:23px;line-height:23px">沈阳</div><div class="t" style="left:936px;top:502px;width:101px;height:23px;line-height:23px"><span class="n" style="margin:0 -0.84px">66</span></div><div class="t" style="left:1036px;top:502px;width:101px;height:23px;line-height:23px">及格</div><div class="t" style="left:36px;top:526px;width:101px;height:23px;line-height:23px"><span class="n" style="margin:0 -1.35px">A15</span></div><div class="t" style="left:136px;top:526px;width:101px;height:23px;line-height:23px">技术员</div><div class="t" style="left:236px;top:526px;width:101px;height:23px;line-height:23px"><span class="n" style="margin:0 -0.84px">14</span></div><div class="t" style="left:336px;top:526px;width:101px;height:23px;line-height:23px">小<span class="n" style="margin:0 -0.55px">D</span></div><div class="t" style="left:436px;top:526px;width:101px;height:23px;line-height:23px">女</div><div class="t" style="left:536px;top:526px;width:101px;height:23px;line-height:23px"><span class="n" style="margin:0 -0.84px">36</span></div><div class="t" style="left:636px;top:526px;width:101px;height:23px;line-height:23px">硕士</div><div class="t" style="left:736px;top:526px;width:101px;height:23px;line-height:23px">四川省成都市</div><div class="t" style="left:836px;top:526px;width:101px;height:23px;line-height:23px">成都</div><div class="t" style="left:936px;top:526px;width:101px;height:23px;line-height:23px"><span class="n" style="margin:0 -0.84px">80</span></div><div class="t" style="left:1036px;top:526px;width:101px;height:23px;line-height:23px">良好</div><div class="t" style="left:36px;top:550px;width:101px;height:23px;line-height:23px"><span class="n" style="margin:0 -1.35px">A14</span></div><div class="t" style="left:136px;top:550px;width:101px;height:23px;line-height:23px">工人</div><div class="t" style="left:236px;top:550px;width:101px;height:23px;line-height:23px"><span class="n" style="margin:0 -0.84px">13</span></div><div class="t" style="left:336px;top:550px;width:101px;height:23px;line-height:23px">小<span class="n" style="margin:0 -0.51px">E</span></div><div class="t" style="left:436px;top:550px;width:101px;height:23px;line-height:23px">男</div><div class="t" style="left:536px;top:550px;width:101px;height:23px;line-height:23px"><span class="n" style="margin:0 -0.84px">25</span></div><div class="t" style="left:636px;top:550px;width:101px;height:23px;line-height:23px">本科</div><div class="t" style="left:736px;top:550px;width:101px;height:23px;line-height:23px">吉林省长春市</div><div class="t" style="left:836px;top:550px;width:101px;height:23px;line-height:23px">长春</div><div class="t" style="left:936px;top:550px;width:101px;height:23px;line-height:23px"><span class="n" style="margin:0 -0.84px">79</span></div><div class="t" style="left:1036px;top:550px;width:101px;height:23px;line-height:23px">及格</div><div class="t" style="left:36px;top:574px;width:101px;height:23px;line-height:23px"><span class="n" style="margin:0 -1.35px">A07</span></div><div class="t" style="left:136px;top:574px;width:101px;height:23px;line-height:23px">工程师</div><div class="t" style="left:236px;top:574px;width:101px;height:23px;line-height:23px"><span class="n" style="margin:0 -0.42px">6</span></div><div class="t" style="left:336px;top:574px;width:101px;height:23px;line-height:23px">小<span class="n" style="margin:0 -0.46px">F</span></div><div class="t" style="left:436px;top:574px;width:101px;height:23px;line-height:23px">女</div><div class="t" style="left:536px;top:574px;width:101px;height:23px;line-height:23px"><span class="n" style="margin:0 -0.84px">24</span></div><div class="t" style="left:636px;top:574px;width:101px;height:23px;line-height:23px">专科</div><div class="t" style="left:736px;top:574px;width:101px;height:23px;line-height:23px">辽宁省沈阳市</div><div class="t" style="left:836px;top:574px;width:101px;height:23px;line-height:23px">沈阳</div><div class="t" style="left:936px;top:574px;width:101px;height:23px;line-height:23px"><span class="n" style="margin:0 -0.84px">90</span></div><div class="t" style="left:1036px;top:574px;width:101px;height:23px;line-height:23px">优秀</div><div class="t" style="left:36px;top:598px;width:101px;height:23px;line-height:23px"><span class="n" style="margin:0 -1.35px">A06</span></div><div class="t" style="left:136px;top:598px;width:101px;height:23px;line-height:23px">工程师</div><div class="t" style="left:236px;top:598px;width:101px;height:23px;line-height:23px"><span class="n" style="margin:0 -0.42px">5</span></div><div class="t" style="left:336px;top:598px;width:101px;height:23px;line-height:23px">小<span class="n" style="margin:0 -0.59px">G</span></div><div class="t" style="left:436px;top:598px;width:101px;height:23px;line-height:23px">女</div><div class="t" style="left:536px;top:598px;width:101px;height:23px;line-height:23px"><span class="n" style="margin:0 -0.84px">30</span></div><div class="t" style="left:636px;top:598px;width:101px;height:23px;line-height:23px">硕士</div><div class="t" style="left:736px;top:598px;width:101px;height:23px;line-height:23px">吉林省长春市</div><div class="t" style="left:836px;top:598px;width:101px;height:23px;line-height:23px">长春</div><div class="t" style="left:936px;top:598px;width:101px;height:23px;line-height:23px"><span class="n" style="margin:0 -0.84px">91</span></div><div class="t" style="left:1036px;top:598px;width:101px;height:23px;line-height:23px">优秀</div><div class="t" style="left:36px;top:622px;width:101px;height:23px;line-height:23px"><span class="n" style="margin:0 -1.35px">A22</span></div><div class="t" style="left:136px;top:622px;width:101px;height:23px;line-height:23px">技术员</div><div class="t" style="left:236px;top:622px;width:101px;height:23px;line-height:23px"><span class="n" style="margin:0 -0.84px">21</span></div><div class="t" style="left:336px;top:622px;width:101px;height:23px;line-height:23px">小红</div><div class="t" style="left:436px;top:622px;width:101px;height:23px;line-height:23px">男</div><div class="t" style="left:536px;top:622px;width:101px;height:23px;line-height:23px"><span class="n" style="margin:0 -0.84px">26</span></div><div class="t" style="left:636px;top:622px;width:101px;height:23px;line-height:23px">专科</div><div class="t" style="left:736px;top:622px;width:101px;height:23px;line-height:23px">江苏省南京市</div><div class="t" style="left:836px;top:622px;width:101px;height:23px;line-height:23px">南京</div><div class="t" style="left:936px;top:622px;width:101px;height:23px;line-height:23px"><span class="n" style="margin:0 -0.84px">87</span></div><div class="t" style="left:1036px;top:622px;width:101px;height:23px;line-height:23px">良好</div><div class="t" style="left:36px;top:646px;width:101px;height:23px;line-height:23px"><span class="n" style="margin:0 -1.35px">A24</span></div><div class="t" style="left:136px;top:646px;width:101px;height:23px;line-height:23px">技术员</div><div class="t" style="left:236px;top:646px;width:101px;height:23px;line-height:23px"><span class="n" style="margin:0 -0.84px">23</span></div><div class="t" style="left:336px;top:646px;width:101px;height:23px;line-height:23px">小李</div><div class="t" style="left:436px;top:646px;width:101px;height:23px;line-height:23px">男</div><div class="t" style="left:536px;top:646px;width:101px;height:23px;line-height:23px"><span class="n" style="margin:0 -0.84px">24</span></div><div class="t" style="left:636px;top:646px;width:101px;height:23px;line-height:23px">硕士</div><div class="t" style="left:736px;top:646px;width:101px;height:23px;line-height:23px">山东省青岛市</div><div class="t" style="left:836px;top:646px;width:101px;height:23px;line-height:23px">青岛</div><div class="t" style="left:936px;top:646px;width:101px;height:23px;line-height:23px"><span class="n" style="margin:0 -0.84px">89</span></div><div class="t" style="left:1036px;top:646px;width:101px;height:23px;line-height:23px">良好</div><div class="t" style="left:36px;top:670px;width:101px;height:23px;line-height:23px"><span class="n" style="margin:0 -1.35px">A06</span></div><div class="t" style="left:136px;top:670px;width:101px;height:23px;line-height:23px">工程师</div><div class="t" style="left:236px;top:670px;width:101px;height:23px;line-height:23px"><span class="n" style="margin:0 -0.42px">5</span></div><div class="t" style="left:336px;top:670px;width:101px;height:23px;line-height:23px">小<span class="n" style="margin:0 -0.59px">G</span></div><div class="t" style="left:436px;top:670px;width:101px;height:23px;line-height:23px">女</div><div class="t" style="left:536px;top:670px;width:101px;height:23px;line-height:23px"><span class="n" style="margin:0 -0.84px">30</span></div><div class="t" style="left:636px;top:670px;width:101px;height:23px;line-height:23px">硕士</div><div class="t" style="left:736px;top:670px;width:101px;height:23px;line-height:23px">吉林省长春市</div><div class="t" style="left:836px;top:670px;width:101px;height:23px;line-height:23px">长春</div><div class="t" style="left:936px;top:670px;width:101px;height:23px;line-height:23px"><span class="n" style="margin:0 -0.84px">91</span></div><div class="t" style="left:1036px;top:670px;width:101px;height:23px;line-height:23px">优秀</div><div class="t" style="left:36px;top:694px;width:101px;height:23px;line-height:23px"><span class="n" style="margin:0 -1.35px">A08</span></div><div class="t" style="left:136px;top:694px;width:101px;height:23px;line-height:23px">助工</div><div class="t" style="left:236px;top:694px;width:101px;height:23px;line-height:23px"><span class="n" style="margin:0 -0.42px">7</span></div><div class="t" style="left:336px;top:694px;width:101px;height:23px;line-height:23px">小明</div><div class="t" style="left:436px;top:694px;width:101px;height:23px;line-height:23px">男</div><div class="t" style="left:536px;top:694px;width:101px;height:23px;line-height:23px"><span class="n" style="margin:0 -0.84px">28</span></div><div class="t" style="left:636px;top:694px;width:101px;height:23px;line-height:23px">本科</div><div class="t" style="left:736px;top:694px;width:101px;height:23px;line-height:23px">江苏省南京市</div><div class="t" style="left:836px;top:694px;width:101px;height:23px;line-height:23px">南京</div><div class="t" style="left:936px;top:694px;width:101px;height:23px;line-height:23px"><span class="n" style="margin:0 -0.84px">78</span></div><div class="t" style="left:1036px;top:694px;width:101px;height:23px;line-height:23px">及格</div><div class="t" style="left:36px;top:718px;width:101px;height:23px;line-height:23px"><span class="n" style="margin:0 -1.35px">A01</span></div><div class="t" style="left:136px;top:718px;width:101px;height:23px;line-height:23px">技术员</div><div class="t" style="left:236px;top:718px;width:101px;height:23px;line-height:23px"><span class="n" style="margin:0 -0.42px">1</span></div><div class="t" style="left:336px;top:718px;width:101px;height:23px;line-height:23px">小王</div><div class="t" style="left:436px;top:718px;width:101px;height:23px;line-height:23px">女</div><div class="t" style="left:536px;top:718px;width:101px;height:23px;line-height:23px"><span class="n" style="margin:0 -0.84px">28</span></div><div class="t" style="left:636px;top:718px;width:101px;height:23px;line-height:23px">本科</div><div class="t" style="left:736px;top:718px;width:101px;height:23px;line-height:23px">湖北省武汉市</div><div class="t" style="left:836px;top:718px;width:101px;height:23px;line-height:23px">武汉</div><div class="t" style="left:936px;top:718px;width:101px;height:23px;line-height:23px"><span class="n" style="margin:0 -0.84px">66</span></div><div class="t" style="left:1036px;top:718px;width:101px;height:23px;line-height:23px">及格</div><div class="t" style="left:36px;top:742px;width:101px;height:23px;line-height:23px"><span class="n" style="margin:0 -1.35px">A25</span></div><div class="t" style="left:136px;top:742px;width:101px;height:23px;line-height:23px">工程师</div><div class="t" style="left:236px;top:742px;width:101px;height:23px;line-height:23px"><span class="n" style="margin:0 -0.84px">24</span></div><div class="t" style="left:336px;top:742px;width:101px;height:23px;line-height:23px">小韦</div><div class="t" style="left:436px;top:742px;width:101px;height:23px;line-height:23px">男</div><div class="t" style="left:536px;top:742px;width:101px;height:23px;line-height:23px"><span class="n" style="margin:0 -0.84px">36</span></div><div class="t" style="left:636px;top:742px;width:101px;height:23px;line-height:23px">专科</div><div class="t" style="left:736px;top:742px;width:101px;height:23px;line-height:23px">福建省厦门市</div><div class="t" style="left:836px;top:742px;width:101px;height:23px;line-height:23px">厦门</div><div class="t" style="left:936px;top:742px;width:101px;height:23px;line-height:23px"><span class="n" style="margin:0 -0.84px">95</span></div><div class="t" style="left:1036px;top:742px;width:101px;height:23px;line-height:23px">优秀</div><div class="t" style="left:36px;top:766px;width:101px;height:23px;line-height:23px"><span class="n" style="margin:0 -1.35px">A04</span></div><div class="t" style="left:136px;top:766px;width:101px;height:23px;line-height:23px">工人</div><div class="t" style="left:236px;top:766px;width:101px;height:23px;line-height:23px"><span class="n" style="margin:0 -0.42px">3</span></div><div class="t" style="left:336px;top:766px;width:101px;height:23px;line-height:23px">小张</div><div class="t" style="left:436px;top:766px;width:101px;height:23px;line-height:23px">男</div><div class="t" style="left:536px;top:766px;width:101px;height:23px;line-height:23px"><span class="n" style="margin:0 -0.84px">30</span></div><div class="t" style="left:636px;top:766px;width:101px;height:23px;line-height:23px">专科</div><div class="t" style="left:736px;top:766px;width:101px;height:23px;line-height:23px">山东省青岛市</div><div class="t" style="left:836px;top:766px;width:101px;height:23px;line-height:23px">青岛</div><div class="t" style="left:936px;top:766px;width:101px;height:23px;line-height:23px"><span class="n" style="margin:0 -0.84px">64</span></div><div class="t" style="left:1036px;top:766px;width:101px;height:23px;line-height:23px">及格</div><div class="t" style="left:36px;top:790px;width:101px;height:23px;line-height:23px"><span class="n" style="margin:0 -1.35px">A16</span></div><div class="t" style="left:136px;top:790px;width:101px;height:23px;line-height:23px">技术员</div><div class="t" style="left:236px;top:790px;width:101px;height:23px;line-height:23px"><span class="n" style="margin:0 -0.84px">15</span></div><div class="t" style="left:336px;top:790px;width:101px;height:23px;line-height:23px">杨十四</div><div class="t" style="left:436px;top:790px;width:101px;height:23px;line-height:23px">女</div><div class="t" style="left:536px;top:790px;width:101px;height:23px;line-height:23px"><span class="n" style="margin:0 -0.84px">33</span></div><div class="t" style="left:636px;top:790px;width:101px;height:23px;line-height:23px">专科</div><div class="t" style="left:736px;top:790px;width:101px;height:23px;line-height:23px">湖北省武汉市</div><div class="t" style="left:836px;top:790px;width:101px;height:23px;line-height:23px">武汉</div><div class="t" style="left:936px;top:790px;width:101px;height:23px;line-height:23px"><span class="n" style="margin:0 -0.84px">87</span></div><div class="t" style="left:1036px;top:790px;width:101px;height:23px;line-height:23px">良好</div><div class="t" style="left:36px;top:814px;width:101px;height:23px;line-height:23px"><span class="n" style="margin:0 -1.35px">A13</span></div><div class="t" style="left:136px;top:814px;width:101px;height:23px;line-height:23px">工人</div><div class="t" style="left:236px;top:814px;width:101px;height:23px;line-height:23px"><span class="n" style="margin:0 -0.84px">12</span></div><div class="t" style="left:336px;top:814px;width:101px;height:23px;line-height:23px">张三</div><div class="t" style="left:436px;top:814px;width:101px;height:23px;line-height:23px">女</div><div class="t" style="left:536px;top:814px;width:101px;height:23px;line-height:23px"><span class="n" style="margin:0 -0.84px">25</span></div><div class="t" style="left:636px;top:814px;width:101px;height:23px;line-height:23px">专科</div><div class="t" style="left:736px;top:814px;width:101px;height:23px;line-height:23px">吉林省长春市</div><div class="t" style="left:836px;top:814px;width:101px;height:23px;line-height:23px">长春</div><div class="t" style="left:936px;top:814px;width:101px;height:23px;line-height:23px"><span class="n" style="margin:0 -0.84px">80</span></div><div class="t" style="left:1036px;top:814px;width:101px;height:23px;line-height:23px">良好</div><div class="t" style="left:36px;top:838px;width:101px;height:23px;line-height:23px"><span class="n" style="margin:0 -1.35px">A11</span></div><div class="t" style="left:136px;top:838px;width:101px;height:23px;line-height:23px">工人</div><div class="t" style="left:236px;top:838px;width:101px;height:23px;line-height:23px"><span class="n" style="margin:0 -0.84px">10</span></div><div class="t" style="left:336px;top:838px;width:101px;height:23px;line-height:23px">赵六</div><div class="t" style="left:436px;top:838px;width:101px;height:23px;line-height:23px">女</div><div class="t" style="left:536px;top:838px;width:101px;height:23px;line-height:23px"><span class="n" style="margin:0 -0.84px">23</span></div><div class="t" style="left:636px;top:838px;width:101px;height:23px;line-height:23px">本科</div><div class="t" style="left:736px;top:838px;width:101px;height:23px;line-height:23px">吉林省长春市</div><div class="t" style="left:836px;top:838px;width:101px;height:23px;line-height:23px">长春</div><div class="t" style="left:936px;top:838px;width:101px;height:23px;line-height:23px"><span class="n" style="margin:0 -0.84px">65</span></div><div class="t" style="left:1036px;top:838px;width:101px;height:23px;line-height:23px">及格</div><div class="t" style="left:36px;top:862px;width:101px;height:23px;line-height:23px"><span class="n" style="margin:0 -1.35px">A03</span></div><div class="t" style="left:136px;top:862px;width:101px;height:23px;line-height:23px">工人</div><div class="t" style="left:236px;top:862px;width:101px;height:23px;line-height:23px"><span class="n" style="margin:0 -0.84px">25</span></div><div class="t" style="left:336px;top:862px;width:101px;height:23px;line-height:23px">郑二</div><div class="t" style="left:436px;top:862px;width:101px;height:23px;line-height:23px">女</div><div class="t" style="left:536px;top:862px;width:101px;height:23px;line-height:23px"><span class="n" style="margin:0 -0.84px">24</span></div><div class="t" style="left:636px;top:862px;width:101px;height:23px;line-height:23px">本科</div><div class="t" style="left:736px;top:862px;width:101px;height:23px;line-height:23px">湖南省长沙市</div><div class="t" style="left:836px;top:862px;width:101px;height:23px;line-height:23px">长沙</div><div class="t" style="left:936px;top:862px;width:101px;height:23px;line-height:23px"><span class="n" style="margin:0 -0.84px">66</span></div><div class="t" style="left:1036px;top:862px;width:101px;height:23px;line-height:23px">及格</div><div class="t" style="left:1157px;top:237px;width:30px;height:23px;line-height:23px;text-align:left">备</div><div class="tri" style="left:636px;top:237px"></div><div class="tri" style="left:36px;top:597px"></div><div class="tri" style="left:36px;top:669px"></div></div>
<svg class="abs" style="left:0;top:0" width="1159" height="916" viewBox="0 0 1159 916">
<defs>
<filter id="sh" x="-50%" y="-50%" width="200%" height="200%"><feGaussianBlur in="SourceAlpha" stdDeviation="2.2"/><feOffset dx="3" dy="1.5"/><feComponentTransfer><feFuncA type="linear" slope="0.75"/></feComponentTransfer><feMerge><feMergeNode/><feMergeNode in="SourceGraphic"/></feMerge></filter>
</defs>
<g filter="url(#sh)">
<path d="M254.2 231 L309.6 383.5" stroke="#ff0000" stroke-width="3.2" stroke-linecap="round"/>
<path d="M246.3 209.2 L261.2 231.6 L254.5 233.4 L249.4 236 Z" fill="#ff0000"/>
</g>
<!-- cursor -->
<g>
<path d="M238.2 193 v16 M230.5 201 h15.5" stroke="#fff" stroke-width="4.2" stroke-linecap="butt"/>
<path d="M233.5 196.6 l-4.3 4.4 l4.3 4.4 z M243 196.6 l4.3 4.4 l-4.3 4.4 z" fill="#000" stroke="#fff" stroke-width="1.6"/>
<path d="M238.2 194 v14.5 M231 201 h14.5" stroke="#000" stroke-width="2.2"/>
<path d="M233.7 197.5 l-3.6 3.5 l3.6 3.5 z M242.8 197.5 l3.6 3.5 l-3.6 3.5 z" fill="#000"/>
</g>
<!-- watermark -->
<g fill="#ffffff" fill-opacity="0.93">
<path d="M984 885.5 L1027.8 861.5 L1042 874.2 L1030.5 874.2 L1024.5 869.6 L1005 880.6 L1002 885.5 Z"/>
<path fill-rule="evenodd" d="M997.2 885.5 L1005 880.6 L1024.5 869.6 L1030.5 874.2 L1041.5 874.2 L1041.5 878.4 L1021 878.4 L1018.5 886 L1040.5 886 L1040 891.6 L1018.5 891.6 L1017.5 898.4 L1037.5 898.4 L1037.5 902.5 L1021 902.5 L1016 906.8 L999.5 906.8 L997.2 904 Z M1005.2 885.4 L1014.6 885.4 L1014.6 890.8 L1005.2 890.8 Z M1005 896 L1014.6 896 L1014.6 902.4 L1005 902.4 Z"/>
<path d="M1045 875.5 h3.5 v3.5 h-3.5z M1050 878.5 h3 v3 h-3z M1042 882 h3.5 v4 h-3.5z M1048 885 h3 v3.5 h-3z M1053 882 h2.5 v3 h-2.5z M1041 893 h3.5 v3.5 h-3.5z M1046 891 h3 v4 h-3z M1051 889 h3 v3 h-3z M1043 899 h3 v3.5 h-3z M1049 896 h2.5 v4 h-2.5z"/>
</g>
</svg>
<div class="abs" style="left:1058px;top:866px;font-size:22.5px;line-height:30px;font-weight:bold;color:#fff;opacity:0.93;-webkit-text-stroke:0.9px #fff;white-space:nowrap">系统之家</div>
<div class="abs" style="left:1050px;top:897px;font-size:9.5px;line-height:11px;font-family:'Liberation Serif',serif;color:rgba(255,255,255,0.9);white-space:nowrap;letter-spacing:0.9px">XITONGZHIJIA.NET</div>

</div>
</body></html>
